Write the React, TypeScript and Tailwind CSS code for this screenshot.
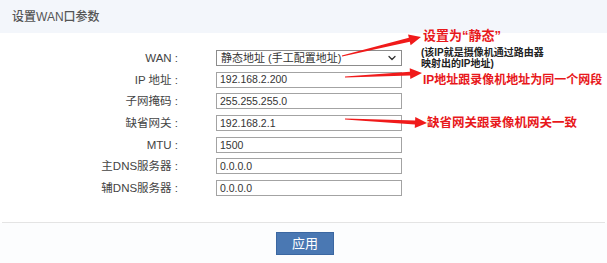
import { ChevronDown } from 'lucide-react'

const font = { fontFamily: '"Liberation Sans", "Noto Sans CJK SC", sans-serif' }

const fields: { label: string; value: string }[] = [
  { label: 'IP 地址 :', value: '192.168.2.200' },
  { label: '子网掩码 :', value: '255.255.255.0' },
  { label: '缺省网关 :', value: '192.168.2.1' },
  { label: 'MTU :', value: '1500' },
  { label: '主DNS服务器 :', value: '0.0.0.0' },
  { label: '辅DNS服务器 :', value: '0.0.0.0' },
]

// tapered red arrow, tail thin, head triangle
function Arrow({ x1, y1, x2, y2 }: { x1: number; y1: number; x2: number; y2: number }) {
  const dx = x2 - x1
  const dy = y2 - y1
  const len = Math.hypot(dx, dy)
  const ux = dx / len
  const uy = dy / len
  const nx = -uy
  const ny = ux
  const head = 12
  const hw = 5.5
  const sw = 2
  const bx = x2 - ux * head
  const by = y2 - uy * head
  const pts = [
    [x1 + nx * 0.5, y1 + ny * 0.5],
    [bx + nx * sw, by + ny * sw],
    [bx + nx * hw, by + ny * hw],
    [x2, y2],
    [bx - nx * hw, by - ny * hw],
    [bx - nx * sw, by - ny * sw],
    [x1 - nx * 0.5, y1 - ny * 0.5],
  ]
  return <polygon points={pts.map((p) => p.join(',')).join(' ')} fill="#f01a1a" />
}

export default function App() {
  return (
    <div className="relative w-[607px] h-[263px] bg-white overflow-hidden" style={font}>
      <div className="h-[33px] bg-[#f3f6fb] flex items-center pl-[12px] text-[12px] font-medium text-[#555]">
        设置WAN口参数
      </div>

      <div className="pt-[17px] grid grid-cols-[178px_186px] gap-x-[38px] gap-y-[5.7px]">
        <div className="h-[16px] leading-[16px] text-right text-[11.5px] text-[#444]">WAN :</div>
        <div className="h-[16px] border border-[#8c8c8c] bg-white flex items-center justify-between pl-[4px] pr-[3px]">
          <span className="text-[11px] text-[#333] leading-none">静态地址 (手工配置地址)</span>
          <ChevronDown size={12} strokeWidth={2.6} className="text-[#333]" />
        </div>
        {fields.map((f) => (
          <div key={f.label} className="contents">
            <div className="h-[16px] leading-[16px] text-right text-[11.5px] text-[#444]">{f.label}</div>
            <div className="h-[16px] border border-[#a3a3a3] bg-white flex items-center pl-[3px]">
              <span className="text-[10.5px] text-[#333] leading-none">{f.value}</span>
            </div>
          </div>
        ))}
      </div>

      <div className="mt-[26px] mx-[2px] border-t border-[#e4e4e4]" />
      <div className="bg-[#fcfdfe] h-[40px] pt-[9px]">
        <button className="ml-[276px] w-[58px] h-[23px] bg-[#4a78b3] border border-[#3b67a1] text-white text-[13px] flex items-center justify-center">
          应用
        </button>
      </div>

      {/* annotations */}
      <svg className="absolute inset-0 pointer-events-none" width="607" height="263">
        <Arrow x1={342} y1={56} x2={421} y2={37} />
        <Arrow x1={345} y1={77} x2={422} y2={73} />
        <Arrow x1={345} y1={119} x2={427} y2={123} />
      </svg>
      <div className="absolute left-[423px] top-[29px] text-[13px] font-bold text-[#e8181b] leading-none whitespace-nowrap">
        设置为“静态”
      </div>
      <div className="absolute left-[421px] top-[47px] text-[10px] font-bold text-[#222] leading-[11px] whitespace-nowrap">
        <div>(该IP就是摄像机通过路由器</div>
        <div>映射出的IP地址)</div>
      </div>
      <div className="absolute left-[423px] top-[74px] text-[12px] font-bold text-[#e8181b] leading-none whitespace-nowrap">
        IP地址跟录像机地址为同一个网段
      </div>
      <div className="absolute left-[427px] top-[117px] text-[12.5px] font-bold text-[#e8181b] leading-none whitespace-nowrap">
        缺省网关跟录像机网关一致
      </div>
    </div>
  )
}
